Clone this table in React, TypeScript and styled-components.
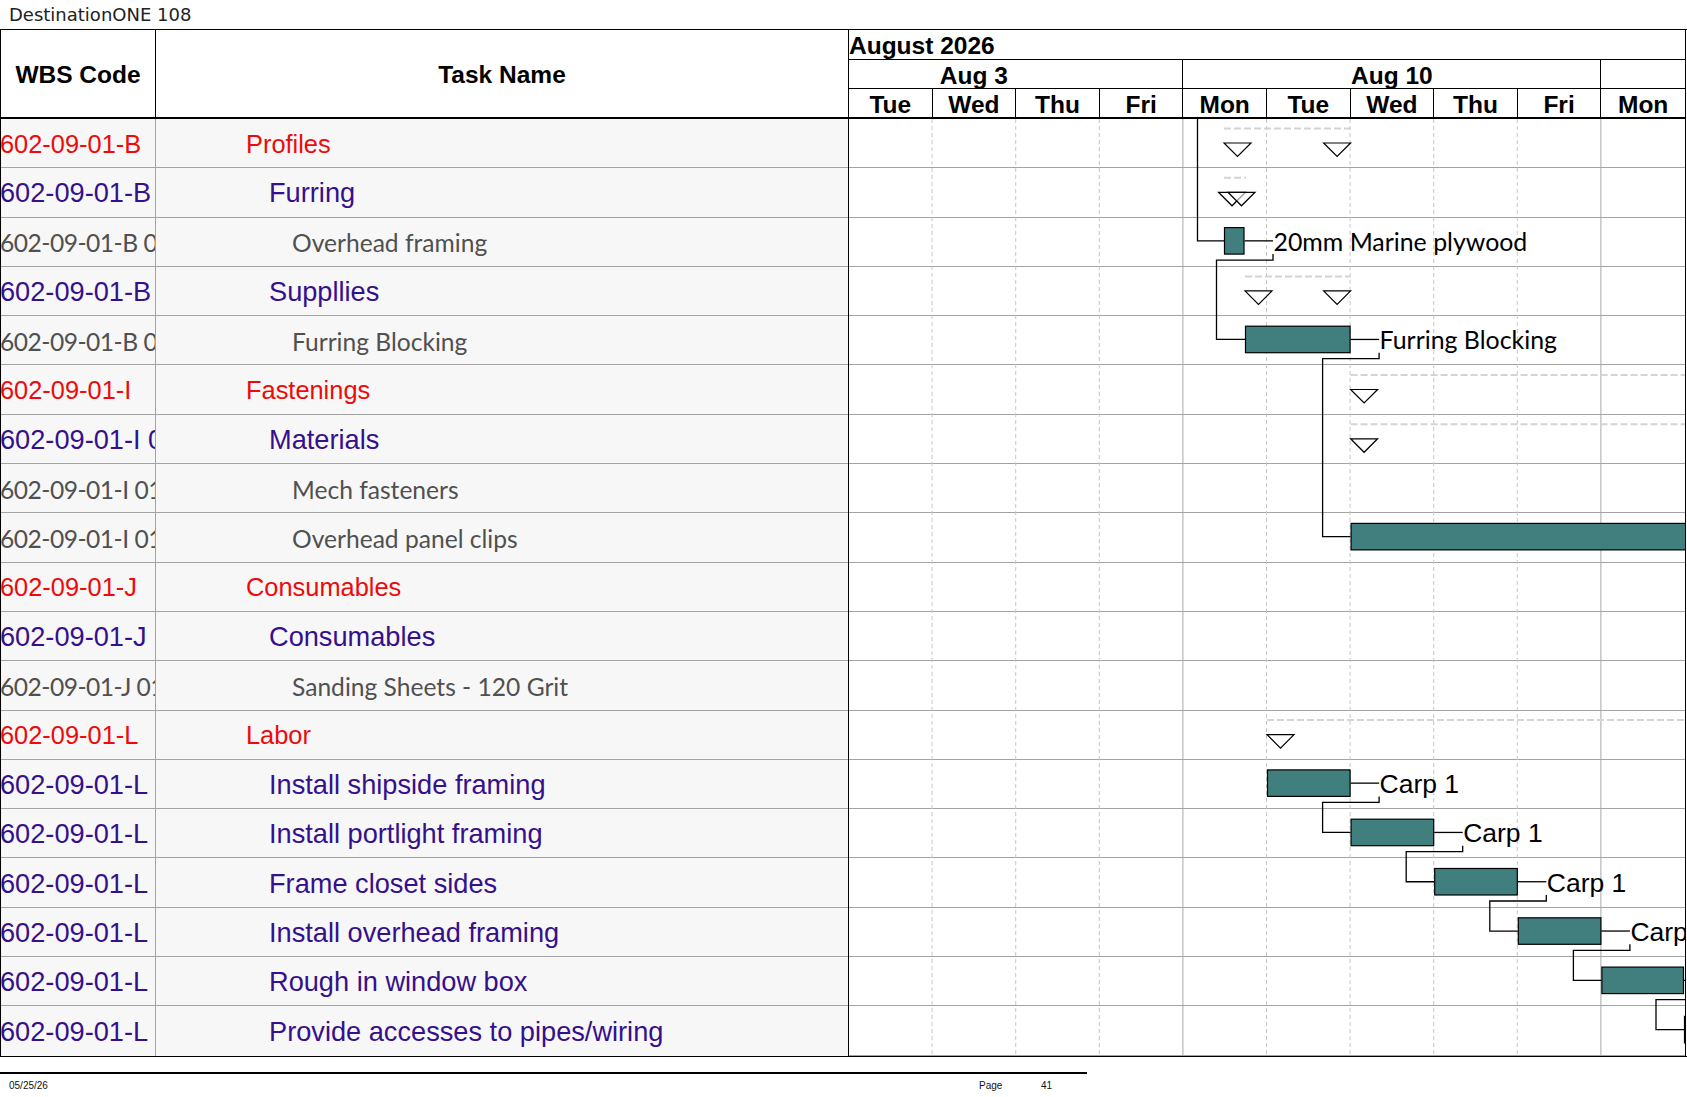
import React from 'react';
import styled, { createGlobalStyle, css } from 'styled-components';

const DAY_W = 83.6;
const ROW_H = 49.3;
const BAR_OFF = 10;
const BAR_H = 26.5;
const TRI_W = 27;
const TRI_H = 13.5;

type Level = 1 | 2 | 3;

interface Task {
  wbs: string;
  name: string;
  level: Level;
}

const tasks: Task[] = [
  { wbs: '602-09-01-B', name: 'Profiles', level: 1 },
  { wbs: '602-09-01-B 01', name: 'Furring', level: 2 },
  { wbs: '602-09-01-B 01 0001', name: 'Overhead framing', level: 3 },
  { wbs: '602-09-01-B 02', name: 'Suppllies', level: 2 },
  { wbs: '602-09-01-B 02 0001', name: 'Furring Blocking', level: 3 },
  { wbs: '602-09-01-I', name: 'Fastenings', level: 1 },
  { wbs: '602-09-01-I 01', name: 'Materials', level: 2 },
  { wbs: '602-09-01-I 01 0001', name: 'Mech fasteners', level: 3 },
  { wbs: '602-09-01-I 01 0002', name: 'Overhead panel clips', level: 3 },
  { wbs: '602-09-01-J', name: 'Consumables', level: 1 },
  { wbs: '602-09-01-J 01', name: 'Consumables', level: 2 },
  { wbs: '602-09-01-J 01 0001', name: 'Sanding Sheets - 120 Grit', level: 3 },
  { wbs: '602-09-01-L', name: 'Labor', level: 1 },
  { wbs: '602-09-01-L', name: 'Install shipside framing', level: 2 },
  { wbs: '602-09-01-L', name: 'Install portlight framing', level: 2 },
  { wbs: '602-09-01-L', name: 'Frame closet sides', level: 2 },
  { wbs: '602-09-01-L', name: 'Install overhead framing', level: 2 },
  { wbs: '602-09-01-L', name: 'Rough in window box', level: 2 },
  { wbs: '602-09-01-L', name: 'Provide accesses to pipes/wiring', level: 2 },
];

const weeks = [
  { label: 'Aug 3', days: 4, hiddenBefore: 1 },
  { label: 'Aug 10', days: 5, hiddenBefore: 0 },
  { label: '', days: 1, hiddenBefore: 0 },
];

const days = ['Tue', 'Wed', 'Thu', 'Fri', 'Mon', 'Tue', 'Wed', 'Thu', 'Fri', 'Mon'];

// chart geometry
const dx = (d: number) => d * DAY_W;
const rowTop = (i: number) => i * ROW_H;
const barMid = (i: number) => rowTop(i) + BAR_OFF + BAR_H / 2;
const CHART_W = dx(10);
const CHART_H = ROW_H * tasks.length;

type LabelKind = 'resource' | 'note';

interface Bar {
  row: number;
  from: number;
  to: number;
  label?: string;
  kind?: LabelKind;
}

const bars: Bar[] = [
  { row: 2, from: 375, to: 395.5, label: '20mm Marine plywood', kind: 'note' },
  { row: 4, from: 396, to: dx(6), label: 'Furring Blocking', kind: 'note' },
  { row: 8, from: dx(6), to: dx(11) },
  { row: 13, from: dx(5), to: dx(6), label: 'Carp 1', kind: 'resource' },
  { row: 14, from: dx(6), to: dx(7), label: 'Carp 1', kind: 'resource' },
  { row: 15, from: dx(7), to: dx(8), label: 'Carp 1', kind: 'resource' },
  { row: 16, from: dx(8), to: dx(9), label: 'Carp 1', kind: 'resource' },
  { row: 17, from: dx(9), to: dx(10) - 1, label: 'Carp 1', kind: 'resource' },
  { row: 18, from: dx(10) - 1, to: dx(11) },
];

const links: [number, number][] = [
  [2, 4],
  [4, 8],
  [13, 14],
  [14, 15],
  [15, 16],
  [16, 17],
  [17, 18],
];

const summaries = [
  { row: 0, from: 375, to: dx(6), marks: [375, dx(6) - TRI_W] },
  { row: 1, from: 375, to: 397, marks: [369.5, 379] },
  { row: 3, from: 396, to: dx(6), marks: [396, dx(6) - TRI_W] },
  { row: 5, from: dx(6), to: dx(11), marks: [dx(6)] },
  { row: 6, from: dx(6), to: dx(11), marks: [dx(6)] },
  { row: 12, from: dx(5), to: dx(11), marks: [dx(5)] },
];

const labelX = (b: Bar) => b.to + 28.5;

const GlobalStyle = createGlobalStyle`
  html, body {
    margin: 0;
    padding: 0;
    background: #fff;
  }
  body {
    font-family: "Liberation Sans", Arial, sans-serif;
    color: #000;
  }
`;

const Page = styled.div`
  width: 1687px;
`;

const TitleBar = styled.div`
  height: 29px;
  padding-left: 9px;
  font-family: "DejaVu Sans", sans-serif;
  font-size: 18px;
  line-height: 30px;
  color: #222;
`;

const Sheet = styled.div`
  display: flex;
  border-top: 1px solid #000;
  border-bottom: 1px solid #000;
`;

const TablePanel = styled.div`
  width: 848px;
  box-sizing: border-box;
  border-left: 1px solid #000;
`;

const TableHeader = styled.div`
  display: grid;
  grid-template-columns: 155px 692px;
  height: 89px;
  box-sizing: border-box;
  border-bottom: 2px solid #000;
`;

const HeaderCell = styled.div<{ $divider?: boolean }>`
  display: flex;
  align-items: center;
  justify-content: center;
  font-weight: bold;
  font-size: 24.5px;
  padding-top: 2px;
  box-sizing: border-box;
  border-right: ${(p) => (p.$divider ? '1px solid #000' : 'none')};
`;

const TableRow = styled.div`
  display: grid;
  grid-template-columns: 155px 692px;
  height: ${ROW_H}px;
  box-sizing: border-box;
  border-bottom: 1px solid #a3a3a3;
  background: #f7f7f7;

  &:last-child {
    border-bottom: none;
  }
`;

const levelText = {
  1: css`
    color: #ee0a0a;
    font-family: "Liberation Sans", Arial, sans-serif;
    font-size: 25.4px;
  `,
  2: css`
    color: #36108c;
    font-family: "Liberation Sans", Arial, sans-serif;
    font-size: 27.2px;
  `,
  3: css`
    color: #505050;
    font-family: Lato, "Open Sans", sans-serif;
    font-size: 24.6px;
  `,
};

const levelIndent = { 1: 90, 2: 113, 3: 136 };

const WbsCell = styled.div<{ $level: Level }>`
  display: flex;
  align-items: center;
  overflow: hidden;
  white-space: nowrap;
  margin-left: -1px;
  padding-top: 2px;
  border-right: 1px solid #a3a3a3;
  ${(p) => levelText[p.$level]}
  letter-spacing: ${(p) => (p.$level === 3 ? '-0.5px' : '0')};
`;

const NameCell = styled.div<{ $level: Level }>`
  display: flex;
  align-items: center;
  overflow: hidden;
  white-space: nowrap;
  padding-top: 2px;
  padding-left: ${(p) => levelIndent[p.$level]}px;
  ${(p) => levelText[p.$level]}
`;

const GanttPanel = styled.div`
  width: ${CHART_W}px;
  border-left: 1px solid #000;
  border-right: 1px solid #000;
`;

const MonthRow = styled.div`
  height: 29px;
  border-bottom: 1px solid #000;
  font-weight: bold;
  font-size: 24.5px;
  line-height: 31px;
  white-space: nowrap;
`;

const ScaleRow = styled.div<{ $thick?: boolean }>`
  display: flex;
  height: 28px;
  border-bottom: ${(p) => (p.$thick ? '2px' : '1px')} solid #000;
`;

const ScaleCell = styled.div<{ $days: number; $shift?: number }>`
  flex: none;
  width: ${(p) => p.$days * DAY_W}px;
  padding-right: ${(p) => (p.$shift ?? 0) * DAY_W}px;
  box-sizing: border-box;
  border-right: 1px solid #000;
  text-align: center;
  font-weight: bold;
  font-size: 24.5px;
  line-height: 31px;
  white-space: nowrap;
  overflow: hidden;

  &:last-child {
    border-right: none;
  }
`;

const GanttBody = styled.div`
  position: relative;
  height: ${CHART_H}px;
  overflow: hidden;
`;

const GanttRow = styled.div`
  height: ${ROW_H}px;
  box-sizing: border-box;
  border-bottom: 1px solid #a3a3a3;

  &:last-child {
    border-bottom: none;
  }
`;

const ChartLayer = styled.svg`
  position: absolute;
  left: 0;
  top: 0;
  overflow: hidden;
`;

const BarLabel = styled.text<{ $kind: LabelKind }>`
  fill: #000;
  ${(p) =>
    p.$kind === 'note'
      ? css`
          font-family: Lato, "Open Sans", sans-serif;
          font-size: 24.9px;
        `
      : css`
          font-family: "Liberation Sans", Arial, sans-serif;
          font-size: 26.5px;
        `}
`;

const Footer = styled.div`
  display: grid;
  grid-template-columns: 970px 62px auto;
  width: 1087px;
  box-sizing: border-box;
  margin-top: 15px;
  padding-left: 9px;
  border-top: 2px solid #000;
  font-family: "Liberation Sans Narrow", "Liberation Sans", sans-serif;
  font-size: 10px;
  line-height: 24px;
  color: #111;
`;

const triangle = (x: number, y: number) =>
  `${x},${y} ${x + TRI_W},${y} ${x + TRI_W / 2},${y + TRI_H}`;

const Chart: React.FC = () => {
  const byRow = new Map(bars.map((b) => [b.row, b]));
  return (
    <ChartLayer width={CHART_W} height={CHART_H} viewBox={`0 0 ${CHART_W} ${CHART_H}`}>
      {/* day grid, solid at week starts */}
      {Array.from({ length: 9 }, (_, i) => i + 1).map((k) => {
        const weekStart = k === 4 || k === 9;
        return (
          <line
            key={k}
            x1={dx(k) - 0.5}
            x2={dx(k) - 0.5}
            y1={0}
            y2={CHART_H}
            stroke={weekStart ? '#a8a8a8' : '#c6c6c6'}
            strokeWidth={1}
            strokeDasharray={weekStart ? undefined : '4 3'}
          />
        );
      })}

      {/* summary rollups */}
      {summaries.map((s) => (
        <g key={s.row}>
          <line
            x1={s.from}
            x2={s.to}
            y1={rowTop(s.row) + 9.5}
            y2={rowTop(s.row) + 9.5}
            stroke="#d4d4d4"
            strokeWidth={2}
            strokeDasharray="7 3"
          />
          {s.marks.map((m) => (
            <polygon
              key={m}
              points={triangle(m, rowTop(s.row) + 24)}
              fill="#fff"
              fillOpacity={0.6}
              stroke="#000"
              strokeWidth={1.2}
            />
          ))}
        </g>
      ))}

      {/* incoming link from a task above the page */}
      <polyline
        points={`348.5,0 348.5,${barMid(2)} 375,${barMid(2)}`}
        fill="none"
        stroke="#000"
        strokeWidth={1.3}
      />

      {links.map(([a, b]) => {
        const src = byRow.get(a)!;
        const dst = byRow.get(b)!;
        const lx = labelX(src);
        const y0 = rowTop(a) + BAR_OFF + BAR_H;
        const pts = [
          `${lx},${y0}`,
          `${lx},${y0 + 6}`,
          `${lx - 56.5},${y0 + 6}`,
          `${lx - 56.5},${barMid(b)}`,
          `${dst.from},${barMid(b)}`,
        ].join(' ');
        return <polyline key={`${a}-${b}`} points={pts} fill="none" stroke="#000" strokeWidth={1.3} />;
      })}

      {bars.map((b) => (
        <g key={b.row}>
          <rect
            x={b.from + 0.5}
            y={rowTop(b.row) + BAR_OFF}
            width={b.to - b.from - 1}
            height={BAR_H}
            fill="#417f7f"
            stroke="#000"
            strokeWidth={1.2}
          />
          {b.label && (
            <>
              <line
                x1={b.to}
                x2={labelX(b)}
                y1={barMid(b.row)}
                y2={barMid(b.row)}
                stroke="#000"
                strokeWidth={1.3}
              />
              <BarLabel $kind={b.kind!} x={labelX(b) + 0.5} y={barMid(b.row) + 10}>
                {b.label}
              </BarLabel>
            </>
          )}
        </g>
      ))}
    </ChartLayer>
  );
};

const App: React.FC = () => {
  return (
    <Page>
      <GlobalStyle />
      <TitleBar>DestinationONE 108</TitleBar>
      <Sheet>
        <TablePanel>
          <TableHeader>
            <HeaderCell $divider>WBS Code</HeaderCell>
            <HeaderCell>Task Name</HeaderCell>
          </TableHeader>
          {tasks.map((t, i) => (
            <TableRow key={i}>
              <WbsCell $level={t.level}>{t.wbs}</WbsCell>
              <NameCell $level={t.level}>{t.name}</NameCell>
            </TableRow>
          ))}
        </TablePanel>

        <GanttPanel>
          <MonthRow>August 2026</MonthRow>
          <ScaleRow>
            {weeks.map((w, i) => (
              <ScaleCell key={i} $days={w.days} $shift={w.hiddenBefore}>
                {w.label}
              </ScaleCell>
            ))}
          </ScaleRow>
          <ScaleRow $thick>
            {days.map((d, i) => (
              <ScaleCell key={i} $days={1}>
                {d}
              </ScaleCell>
            ))}
          </ScaleRow>
          <GanttBody>
            {tasks.map((_, i) => (
              <GanttRow key={i} />
            ))}
            <Chart />
          </GanttBody>
        </GanttPanel>
      </Sheet>
      <Footer>
        <span>05/25/26</span>
        <span>Page</span>
        <span>41</span>
      </Footer>
    </Page>
  );
};

export default App;
